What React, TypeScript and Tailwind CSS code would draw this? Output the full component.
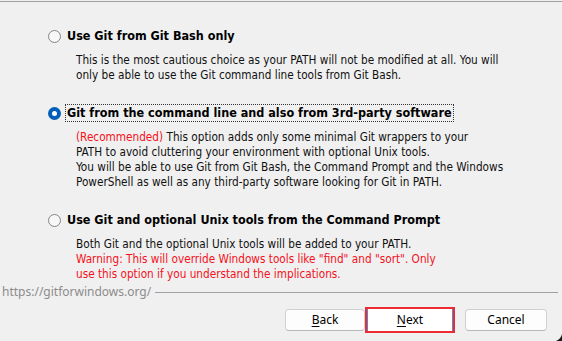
import React from "react";

function Radio({ checked }: { checked?: boolean }) {
  if (checked) {
    return (
      <div className="w-[13px] h-[13px] rounded-full bg-[#005fb8] flex items-center justify-center shrink-0">
        <div className="w-[5px] h-[5px] rounded-full bg-white" />
      </div>
    );
  }
  return <div className="w-[13px] h-[13px] rounded-full border border-[#858585] bg-[#f7f7f7] shrink-0" />;
}

function Option({
  label,
  checked,
  focused,
  children,
}: {
  label: string;
  checked?: boolean;
  focused?: boolean;
  children: React.ReactNode;
}) {
  return (
    <div className="flex flex-col">
      <div className="flex items-center h-[18px] pl-[48px]">
        <Radio checked={checked} />
        <div
          className={
            "ml-[4px] h-[18px] flex items-center px-[1px] border border-dotted text-[12.5px] font-bold text-black whitespace-nowrap " +
            (focused ? "border-[#333]" : "border-transparent")
          }
        >
          {label}
        </div>
      </div>
      <div className="mt-[8px] pl-[76px] text-[11.7px] leading-[15px] text-[#111] whitespace-nowrap">{children}</div>
    </div>
  );
}

export default function App() {
  return (
    <div className="w-[562px] h-[341px] bg-[#f0f0f0] relative overflow-hidden [font-family:'DejaVu_Sans_Condensed','DejaVu_Sans',sans-serif] [font-stretch:condensed]">
      <div className="mt-[1px] h-px bg-[#a0a0a0]" />
      <div className="pt-[25px] flex flex-col gap-[21px]">
        <Option label="Use Git from Git Bash only">
          <div>This is the most cautious choice as your PATH will not be modified at all. You will</div>
          <div>only be able to use the Git command line tools from Git Bash.</div>
        </Option>
        <Option label="Git from the command line and also from 3rd-party software" checked focused>
          <div>
            <span className="text-[#f5101c]">(Recommended)</span> This option adds only some minimal Git wrappers to your
          </div>
          <div>PATH to avoid cluttering your environment with optional Unix tools.</div>
          <div>You will be able to use Git from Git Bash, the Command Prompt and the Windows</div>
          <div>PowerShell as well as any third-party software looking for Git in PATH.</div>
        </Option>
        <Option label="Use Git and optional Unix tools from the Command Prompt">
          <div>Both Git and the optional Unix tools will be added to your PATH.</div>
          <div className="text-[#f5101c]">Warning: This will override Windows tools like "find" and "sort". Only</div>
          <div className="text-[#f5101c]">use this option if you understand the implications.</div>
        </Option>
      </div>
      <div className="mt-[2px] flex items-center pl-[2px] pr-[4px]">
        <span className="text-[12px] text-[#8c8c8c] [font-family:'Noto_Sans',sans-serif] [font-stretch:normal] leading-[16px]">
          https://gitforwindows.org/
        </span>
        <div className="ml-[4px] flex-1 h-px bg-[#a0a0a0]" />
      </div>
      <div className="mt-[7px] flex items-center pl-[285px] [font-family:'Noto_Sans',sans-serif] [font-stretch:normal] text-[12px] text-black">
        <button className="w-[80px] h-[22px] rounded-[4px] border border-[#d0d0d0] border-b-[#b8b8b8] bg-[#fdfdfd] flex items-center justify-center">
          <span>
            <span className="underline underline-offset-2">B</span>ack
          </span>
        </button>
        <div className="w-[90px] h-[26px] border-2 border-[#ee2b33] flex">
          <button className="flex-1 h-full border-x border-[#4a8fd6] bg-white flex items-center justify-center">
            <span>
              <span className="underline underline-offset-2">N</span>ext
            </span>
          </button>
        </div>
        <button className="ml-[10px] w-[82px] h-[22px] rounded-[4px] border border-[#d0d0d0] border-b-[#b8b8b8] bg-[#fdfdfd] flex items-center justify-center">
          Cancel
        </button>
      </div>
      <svg className="absolute right-0 bottom-0" width="6" height="7" viewBox="0 0 6 7">
        <path d="M6 0 L6 7 L0 7 Q5 5 6 0 Z" fill="#1a1a1a" />
      </svg>
    </div>
  );
}
